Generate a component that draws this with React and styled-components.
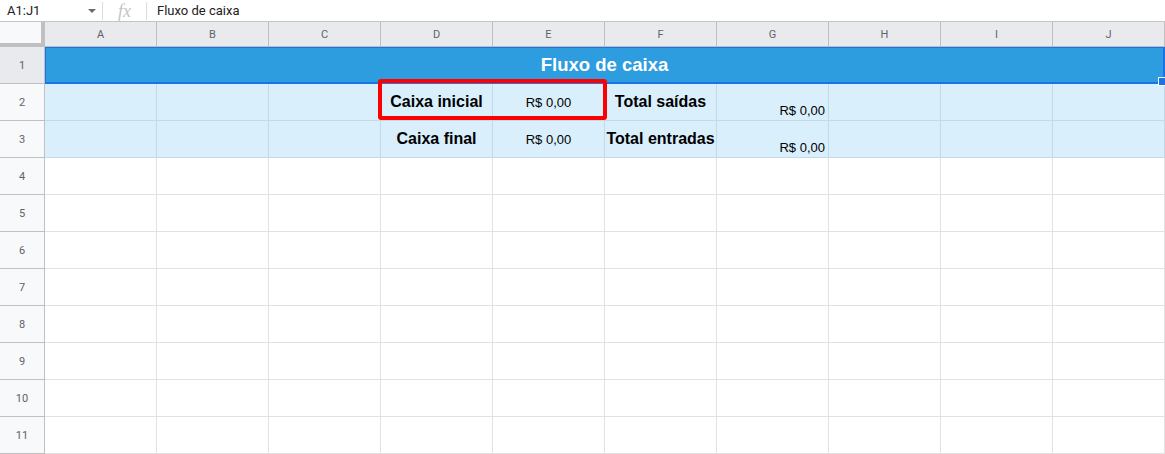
import React from "react";
import styled, { createGlobalStyle } from "styled-components";

const columns = ["A", "B", "C", "D", "E", "F", "G", "H", "I", "J"];

const rows = [
  null,
  [
    "",
    "",
    "",
    { text: "Caixa inicial", bold: true },
    { text: "R$ 0,00" },
    { text: "Total saídas", bold: true },
    { text: "R$ 0,00", align: "right", valign: "end" },
    "",
    "",
    "",
  ],
  [
    "",
    "",
    "",
    { text: "Caixa final", bold: true },
    { text: "R$ 0,00" },
    { text: "Total entradas", bold: true },
    { text: "R$ 0,00", align: "right", valign: "end" },
    "",
    "",
    "",
  ],
];

const GlobalStyle = createGlobalStyle`
  * {
    box-sizing: border-box;
  }

  body {
    margin: 0;
    background: #ffffff;
    font-family: Roboto, "Liberation Sans", Arial, sans-serif;
    overflow: hidden;
  }
`;

function App() {
  return (
    <>
      <GlobalStyle />
      <Page>
        <FormulaBar>
          <NameBox>
            <span>A1:J1</span>
            <Caret />
          </NameBox>
          <Divider />
          <Fx>fx</Fx>
          <Divider />
          <FormulaText>Fluxo de caixa</FormulaText>
        </FormulaBar>

        <Sheet>
          <Corner />
          {columns.map((c) => (
            <ColHeader key={c}>{c}</ColHeader>
          ))}

          <RowHeader selected>1</RowHeader>
          <TitleCell>Fluxo de caixa</TitleCell>

          {[2, 3].map((r) => (
            <React.Fragment key={r}>
              <RowHeader>{r}</RowHeader>
              {rows[r - 1].map((cell, i) => (
                <Cell
                  key={i}
                  tinted
                  $align={cell.align}
                  $valign={cell.valign}
                  $bold={cell.bold}
                >
                  {cell.text}
                </Cell>
              ))}
            </React.Fragment>
          ))}

          {[4, 5, 6, 7, 8, 9, 10, 11].map((r) => (
            <React.Fragment key={r}>
              <RowHeader>{r}</RowHeader>
              {columns.map((c) => (
                <Cell key={c} />
              ))}
            </React.Fragment>
          ))}

          <Highlight />
        </Sheet>
      </Page>
    </>
  );
}

const Page = styled.div`
  width: 1165px;
  height: 454px;
  overflow: hidden;
`;

const FormulaBar = styled.div`
  height: 22px;
  display: flex;
  align-items: center;
  border-bottom: 1px solid #c4c4c4;
  font-size: 13px;
  color: #222222;
`;

const NameBox = styled.div`
  width: 102px;
  padding: 0 6px 0 7px;
  display: flex;
  align-items: center;
  justify-content: space-between;
`;

const Caret = styled.div`
  width: 0;
  height: 0;
  border-left: 4px solid transparent;
  border-right: 4px solid transparent;
  border-top: 4px solid #6b6b6b;
`;

const Divider = styled.div`
  width: 1px;
  height: 18px;
  background: #dadce0;
`;

const Fx = styled.div`
  width: 43px;
  text-align: center;
  font-family: "Liberation Serif", serif;
  font-style: italic;
  font-size: 18px;
  color: #c4c4c4;
  line-height: 20px;
`;

const FormulaText = styled.div`
  padding-left: 10px;
`;

const Sheet = styled.div`
  position: relative;
  display: grid;
  grid-template-columns: 45px repeat(10, 112px);
  grid-template-rows: 25px repeat(11, 37px);
`;

const Corner = styled.div`
  background: #f8f9fa;
  border-right: 4px solid #c0c0c0;
  border-bottom: 4px solid #c0c0c0;
`;

const ColHeader = styled.div`
  display: flex;
  align-items: center;
  justify-content: center;
  background: #e9eaed;
  border-right: 1px solid #c0c0c0;
  border-bottom: 1px solid #c0c0c0;
  font-size: 11px;
  color: #5f6368;
`;

const RowHeader = styled.div`
  display: flex;
  align-items: center;
  justify-content: center;
  background: ${(props) => (props.selected ? "#e8eaed" : "#f8f9fa")};
  border-right: 1px solid #c0c0c0;
  border-bottom: 1px solid #c0c0c0;
  font-size: 11px;
  color: #5f6368;
`;

const TitleCell = styled.div`
  grid-column: span 10;
  display: flex;
  align-items: center;
  justify-content: center;
  background: #2d9ddf;
  border: 2px solid #1a73e8;
  border-left-width: 1px;
  border-top-width: 1px;
  font-family: "Liberation Sans", Arial, sans-serif;
  font-weight: 700;
  font-size: 18.5px;
  color: #ffffff;
  position: relative;

  &::after {
    content: "";
    position: absolute;
    right: -3px;
    bottom: -4px;
    width: 6px;
    height: 7px;
    background: #1a73e8;
    border: 1px solid #ffffff;
  }
`;

const Cell = styled.div`
  display: flex;
  justify-content: ${(p) => (p.$align === "right" ? "flex-end" : "center")};
  align-items: ${(p) => (p.$valign === "end" ? "flex-end" : "center")};
  padding: ${(p) => (p.$valign === "end" ? "0 3px 2px" : "0 2px")};
  background: ${(p) => (p.tinted ? "#d9effc" : "#ffffff")};
  border-right: 1px solid ${(p) => (p.tinted ? "#c5d8e6" : "#e2e2e2")};
  border-bottom: 1px solid ${(p) => (p.tinted ? "#c5d8e6" : "#e2e2e2")};
  font-family: "Liberation Sans", Arial, sans-serif;
  font-weight: ${(p) => (p.$bold ? 700 : 400)};
  font-size: ${(p) => (p.$bold ? "16px" : "13px")};
  color: #000000;
  white-space: nowrap;
  overflow: visible;
`;

const Highlight = styled.div`
  position: absolute;
  left: 378px;
  top: 57px;
  width: 229px;
  height: 41px;
  border: 4px solid #ff0000;
  border-radius: 3px;
  pointer-events: none;
`;

export default App;
